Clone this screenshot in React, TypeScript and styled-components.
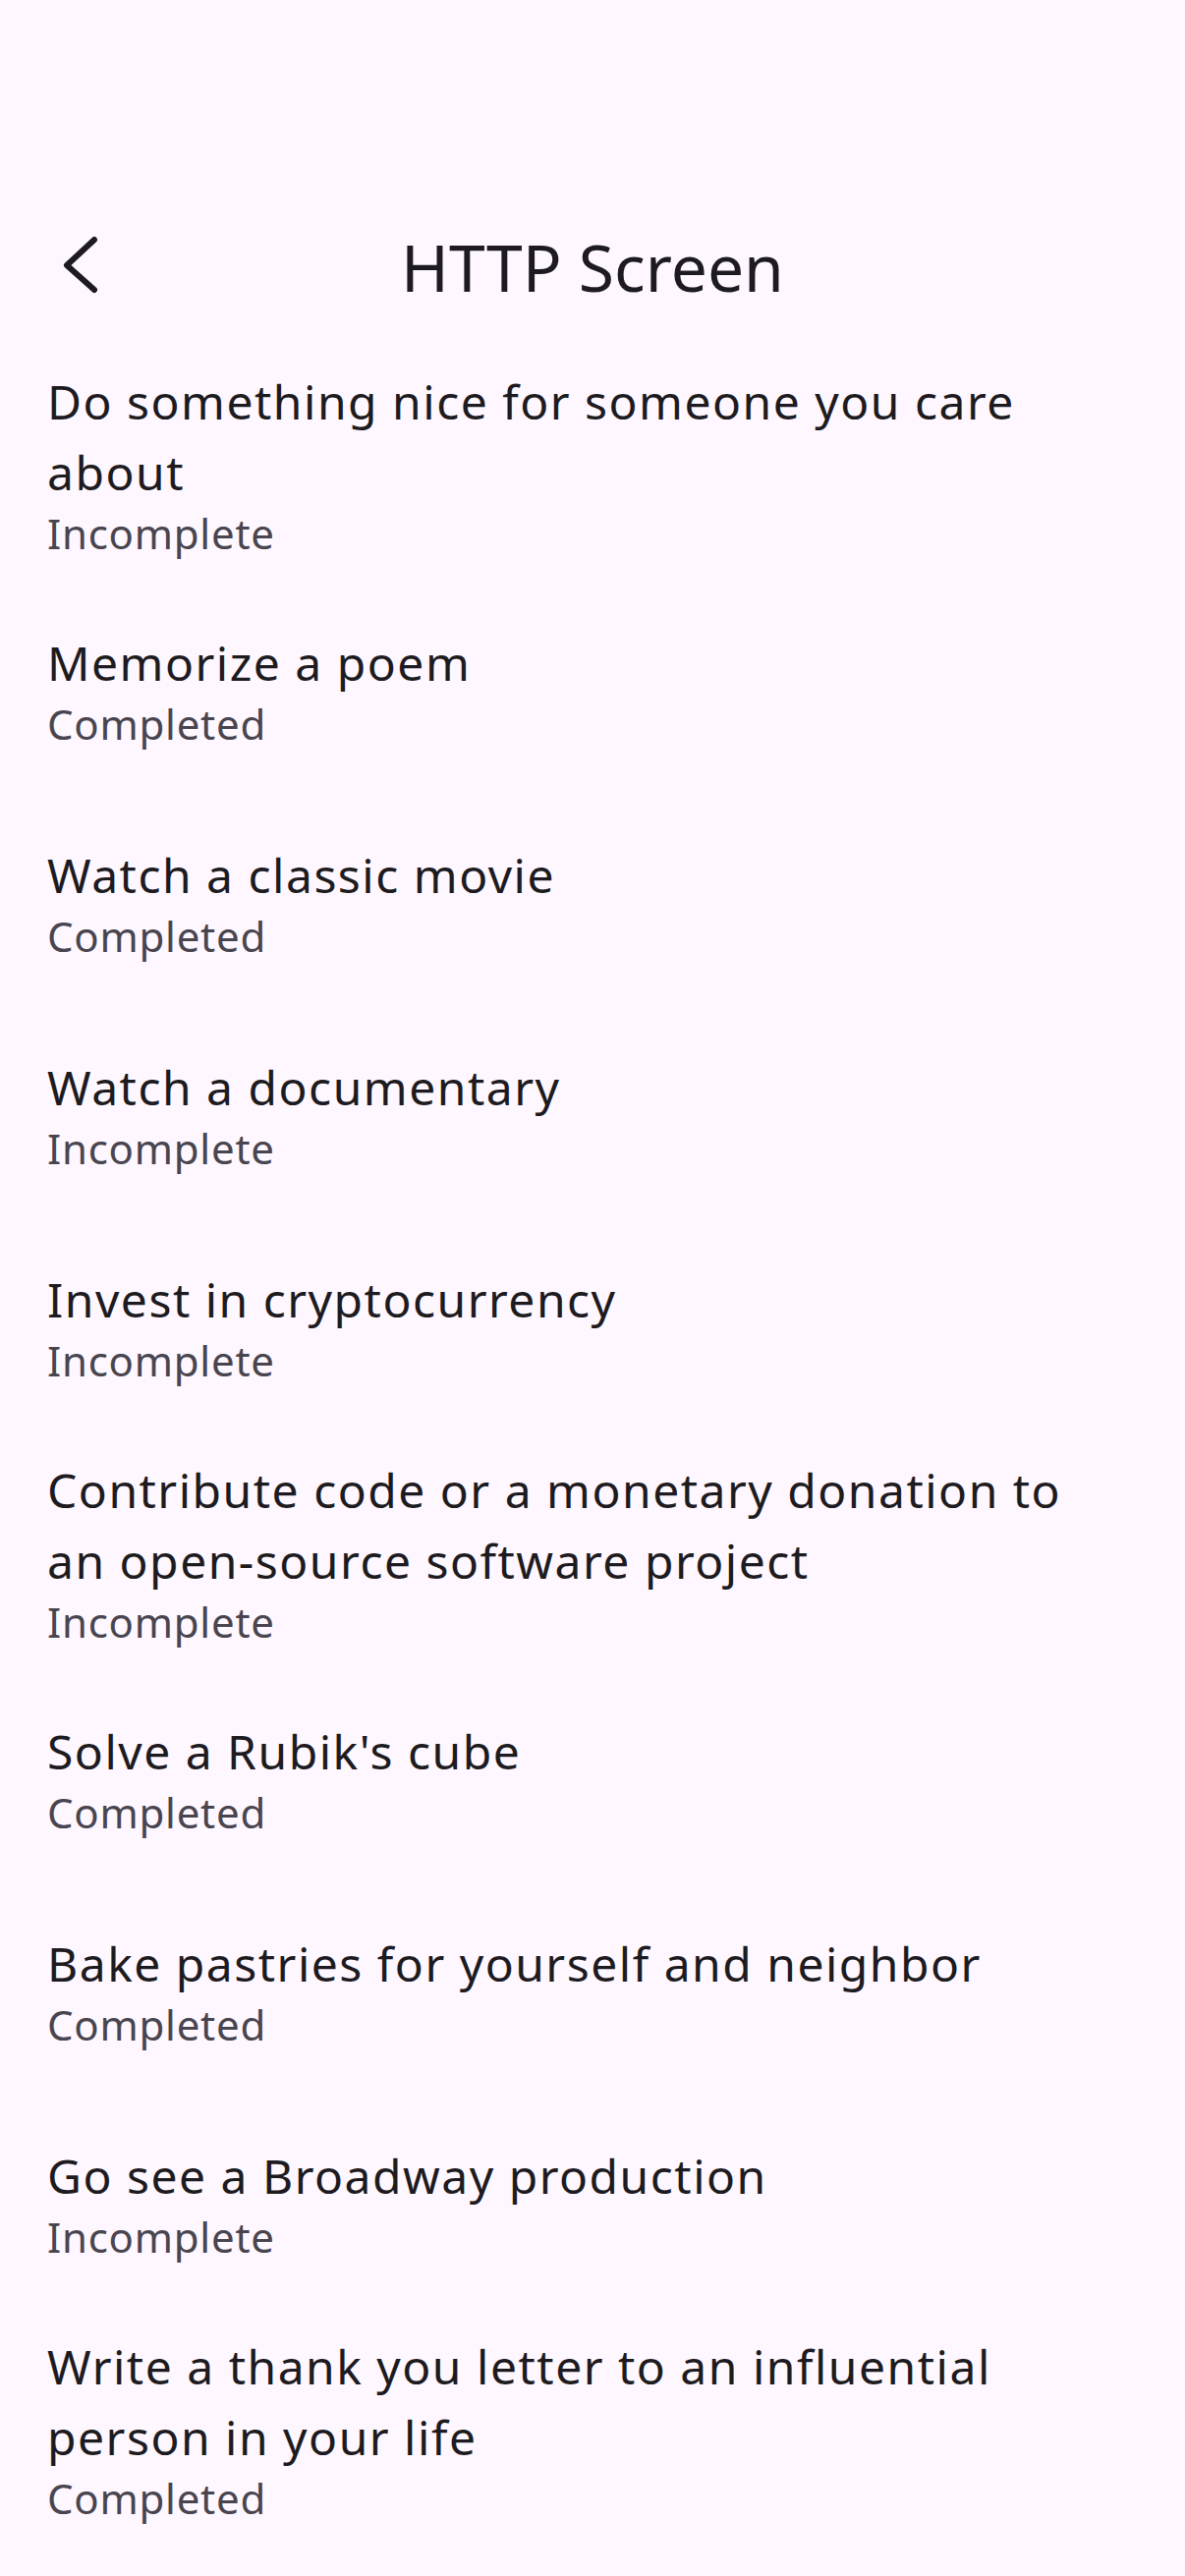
import styled, { createGlobalStyle } from "styled-components";

const GlobalStyle = createGlobalStyle`
  * {
    box-sizing: border-box;
  }
  body {
    margin: 0;
    background: #fef7ff;
    font-family: "Noto Sans", "Open Sans", sans-serif;
    -webkit-font-smoothing: antialiased;
  }
`;

const Screen = styled.div`
  width: 1206px;
  min-height: 2622px;
  background: #fef7ff;
  color: #1d1b20;
`;

const AppBar = styled.header`
  display: grid;
  grid-template-columns: 1fr auto 1fr;
  align-items: start;
  padding: 226px 0 33px;
`;

const BackButton = styled.button`
  justify-self: start;
  display: flex;
  margin: 8px 0 0 56px;
  padding: 0;
  border: none;
  background: none;
  color: #1d1b20;
  cursor: pointer;
`;

const Title = styled.h1`
  margin: 0;
  font-size: 66px;
  font-weight: 400;
  line-height: 90px;
  color: #1d1b20;
`;

const List = styled.ul`
  list-style: none;
  margin: 0;
  padding: 0;
`;

const Tile = styled.li`
  display: flex;
  flex-direction: column;
  justify-content: center;
  min-height: 216px;
  padding: 24px 72px 24px 48px;
`;

const TileTitle = styled.div`
  font-size: 48px;
  line-height: 72px;
  letter-spacing: 1.5px;
  color: #1d1b20;
`;

const TileSubtitle = styled.div`
  font-size: 42px;
  line-height: 52px;
  letter-spacing: 0.75px;
  color: #49454f;
`;

const todos = [
  { title: "Do something nice for someone you care about", completed: false },
  { title: "Memorize a poem", completed: true },
  { title: "Watch a classic movie", completed: true },
  { title: "Watch a documentary", completed: false },
  { title: "Invest in cryptocurrency", completed: false },
  {
    title:
      "Contribute code or a monetary donation to an open-source software project",
    completed: false
  },
  { title: "Solve a Rubik's cube", completed: true },
  { title: "Bake pastries for yourself and neighbor", completed: true },
  { title: "Go see a Broadway production", completed: false },
  {
    title: "Write a thank you letter to an influential person in your life",
    completed: true
  }
];

function BackIcon() {
  return (
    <svg width="48" height="72" viewBox="0 0 48 72" fill="none">
      <polyline
        points="40,10 12,36 40,61"
        stroke="currentColor"
        strokeWidth="6"
        strokeLinecap="round"
        strokeLinejoin="round"
      />
    </svg>
  );
}

function App() {
  return (
    <Screen>
      <GlobalStyle />
      <AppBar>
        <BackButton aria-label="Back">
          <BackIcon />
        </BackButton>
        <Title>HTTP Screen</Title>
        <span />
      </AppBar>
      <List>
        {todos.map((todo) => (
          <Tile key={todo.title}>
            <TileTitle>{todo.title}</TileTitle>
            <TileSubtitle>
              {todo.completed ? "Completed" : "Incomplete"}
            </TileSubtitle>
          </Tile>
        ))}
      </List>
    </Screen>
  );
}

export default App;
